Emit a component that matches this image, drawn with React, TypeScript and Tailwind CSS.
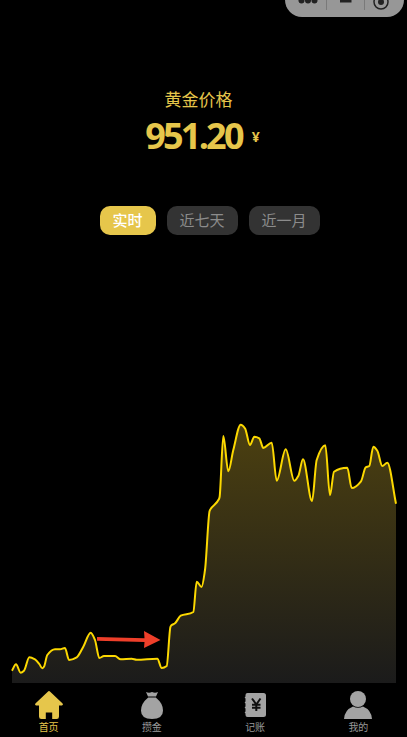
import React from "react";

const pts: [number, number][] = [
  [12,670.7],[16,664.3],[20.7,672.7],[24,670.7],[29.3,657.3],[35,659.3],[39.3,664],[42.3,668.3],[44,666.7],[47.3,655],[55,649.3],[60,649.3],[65,648],[69,660],[76.7,657.3],[83.3,646.7],[90.7,632.7],[95,640],[99.3,658],[104,656],[115,656],[120.7,659.3],[131.7,658.7],[136.7,659.7],[157.3,658.7],[161.7,668],[166.7,666],[170.4,627],[171,625.7],[175,623.3],[180.7,615.7],[193.3,612],[196.7,581.7],[201.5,587],[205,570],[209.6,511],[210.4,509.3],[219,499],[219.6,497],[223.3,436],[228.3,471.3],[233.3,450],[240.7,424.7],[245,428.3],[250,445],[254.3,436.7],[259.3,438.3],[263.3,448],[271.7,442.7],[276.7,480.7],[285.7,449.3],[294.3,480.7],[298.3,476],[303,459.3],[312,501],[316.7,460],[325.3,445.3],[330,495.3],[334,471.7],[347.3,467.7],[351.7,488],[361,481.3],[365.7,467.3],[369.3,466],[373.3,446.7],[377.3,450.7],[382.3,466],[387.3,462.7],[396,503.7],
];
const TOP = 410;
function linePath() {
  const p = pts.map(([x, y]) => [x, y - TOP]);
  const n = p.length;
  const s: number[] = [];
  for (let i = 0; i < n - 1; i++) s.push((p[i + 1][1] - p[i][1]) / (p[i + 1][0] - p[i][0]));
  const m: number[] = [s[0]];
  for (let i = 1; i < n - 1; i++) {
    if (s[i - 1] * s[i] <= 0) { m.push(0); continue; }
    const h0 = p[i][0] - p[i - 1][0], h1 = p[i + 1][0] - p[i][0];
    const w1 = 2 * h1 + h0, w2 = h1 + 2 * h0;
    m.push((w1 + w2) / (w1 / s[i - 1] + w2 / s[i]));
  }
  m.push(s[n - 2]);
  let d = `M${p[0][0]} ${p[0][1]}`;
  for (let i = 0; i < n - 1; i++) {
    const h = (p[i + 1][0] - p[i][0]) / 3;
    d += ` C${(p[i][0] + h).toFixed(1)} ${(p[i][1] + m[i] * h).toFixed(1)} ${(p[i + 1][0] - h).toFixed(1)} ${(p[i + 1][1] - m[i + 1] * h).toFixed(1)} ${p[i + 1][0]} ${p[i + 1][1]}`;
  }
  return d;
}

function Chart() {
  const d = linePath();
  return (
    <svg width="407" height="273" viewBox="0 0 407 273" className="block">
      <defs>
        <linearGradient id="g" x1="0" y1="0" x2="0" y2="1">
          <stop offset="0" stopColor="#4c4010" />
          <stop offset="1" stopColor="#1b1b1b" />
        </linearGradient>
      </defs>
      <path d={`${d} L396 273 L12 273 Z`} fill="url(#g)" />
      <path d={d} fill="none" stroke="#fcd800" strokeWidth="2" />
      <path d="M97 227 L144.5 228.2 L144 221 L160.5 230 L144 238 L144.5 232 L97 230.8 Z" fill="#ee3f2a" />
    </svg>
  );
}

const Home = () => (
  <svg width="30" height="30" viewBox="0 0 30 30" fill="#e6c64b">
    <path d="M15 1 Q15.6 1 16.2 1.7 L28.6 13.6 Q29.6 15.2 28 15.4 L25 15.4 L25 26.5 Q25 29 22.6 29 L18.2 29 L18.2 22.5 L11.8 22.5 L11.8 29 L7.4 29 Q5 29 5 26.5 L5 15.4 L2 15.4 Q.4 15.2 1.4 13.6 L13.8 1.7 Q14.4 1 15 1Z" />
  </svg>
);
const Bag = () => (
  <svg width="30" height="30" viewBox="0 0 30 30" fill="#a3a3a3">
    <path d="M9 2 Q12 3.4 15 2 Q18 3.4 21 2 L19 6.6 L11 6.6 Z" />
    <path d="M11.2 7.6 L18.8 7.6 Q26 13.5 26 20.5 Q26 29 15 29 Q4 29 4 20.5 Q4 13.5 11.2 7.6Z" />
  </svg>
);
const Ledger = () => (
  <svg width="30" height="30" viewBox="0 0 30 30">
    <path d="M7.5 3 L23.5 3 Q26 3 26 5.5 L26 24.5 Q26 27 23.5 27 L7.5 27 Q5.5 27 5.5 25 L5.5 23.5 L4.6 22.5 L5.5 21.5 L5.5 18.5 L4.6 17.5 L5.5 16.5 L5.5 13.5 L4.6 12.5 L5.5 11.5 L5.5 8.5 L4.6 7.5 L5.5 6.5 L5.5 5 Q5.5 3 7.5 3Z" fill="#a3a3a3" />
    <path d="M12 8.5 L16.3 14.5 L20.5 8.5 M12 14.8 L20.5 14.8 M12 17.8 L20.5 17.8 M16.3 14.5 L16.3 21" fill="none" stroke="#111" strokeWidth="2" />
  </svg>
);
const User = () => (
  <svg width="30" height="30" viewBox="0 0 30 30" fill="#a3a3a3">
    <circle cx="15" cy="9" r="8" />
    <path d="M1 29 Q1.5 20 10 16.5 Q15 19 20 16.5 Q28.5 20 29 29Z" />
  </svg>
);

function Tab({ icon, label, active }: { icon: React.ReactNode; label: string; active?: boolean }) {
  return (
    <div className="flex w-[103.33px] flex-col items-center">
      {icon}
      <span className={`mt-[1px] text-[10px] leading-[13px] ${active ? "text-[#e6c64b]" : "text-[#999999]"}`}>{label}</span>
    </div>
  );
}

export default function App() {
  return (
    <div
      className="relative h-[737px] w-[407px] overflow-hidden bg-black"
      style={{ fontFamily: '"Open Sans","Noto Sans CJK SC",sans-serif' }}
    >
      <div className="absolute left-[285px] top-[-20px] h-[37px] w-[118.5px] overflow-hidden rounded-[17px] bg-[#979797]">
        <svg width="119" height="17" viewBox="285 0 119 17" className="absolute left-0 top-[20px]">
          <circle cx="301.5" cy="0.5" r="3" fill="#222" />
          <circle cx="308" cy="0.5" r="3" fill="#222" />
          <circle cx="314.5" cy="0.5" r="3" fill="#222" />
          <path d="M326.5 0 V10 M364.5 0 V10" stroke="#7a7a7a" strokeWidth="1" />
          <path d="M340 0 H351.5 V2.5 H340 Z" fill="#222" />
          <circle cx="381" cy="2" r="7" fill="none" stroke="#222" strokeWidth="1.5" />
          <circle cx="381" cy="2" r="3" fill="#222" />
        </svg>
      </div>
      <div className="flex flex-col items-center pt-[87px]">
        <div className="mr-[10px] text-[17px] leading-[25px] text-[#e6c64b]">黄金价格</div>
        <div className="mr-[2px] mt-[1px] flex items-center text-[#e6c64b]">
          <span className="text-[36px] font-bold leading-[46px] tracking-[-2.8px]">951.20</span>
          <span className="ml-[10px] mt-[1px] text-[14px] font-bold">¥</span>
        </div>
        <div className="ml-[12px] mt-[47px] flex items-center gap-[11px] text-[15px] leading-[28px]">
          <div className="h-[29px] w-[56px] rounded-[10px] bg-[#e6c64b] text-center font-medium text-white">实时</div>
          <div className="h-[29px] w-[71px] rounded-[10px] bg-[#333333] text-center text-[#8c8c8c]">近七天</div>
          <div className="h-[29px] w-[71px] rounded-[10px] bg-[#333333] text-center text-[#8c8c8c]">近一月</div>
        </div>
      </div>
      <div className="mt-[175px]"><Chart /></div>
      <div className="-ml-[3px] mt-[7px] flex w-[413px]">
        <Tab icon={<Home />} label="首页" active />
        <Tab icon={<Bag />} label="攒金" />
        <Tab icon={<Ledger />} label="记账" />
        <Tab icon={<User />} label="我的" />
      </div>
    </div>
  );
}
